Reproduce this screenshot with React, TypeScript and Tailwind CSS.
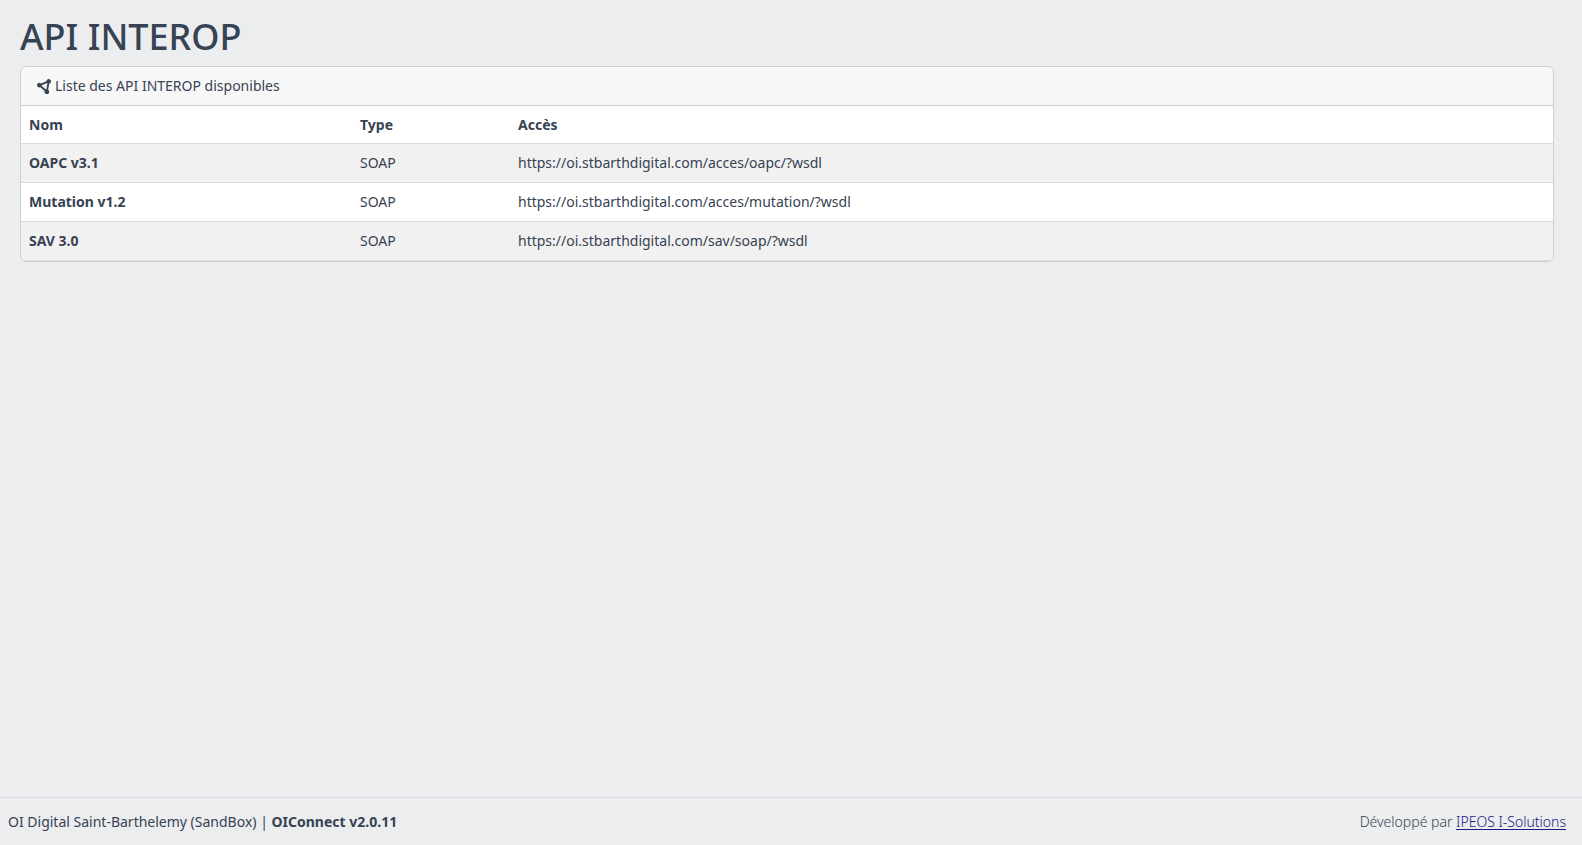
import { FaCircleNodes } from "react-icons/fa6";

interface Api {
  name: string;
  type: string;
  url: string;
}

const apis: Api[] = [
  { name: "OAPC v3.1", type: "SOAP", url: "https://oi.stbarthdigital.com/acces/oapc/?wsdl" },
  { name: "Mutation v1.2", type: "SOAP", url: "https://oi.stbarthdigital.com/acces/mutation/?wsdl" },
  { name: "SAV 3.0", type: "SOAP", url: "https://oi.stbarthdigital.com/sav/soap/?wsdl" },
];

function ApiTable() {
  return (
    <table className="w-full table-fixed text-left">
      <thead className="leading-[21px]">
        <tr className="border-b border-[#d8dbe0] bg-white">
          <th className="w-[331px] p-2 font-bold">Nom</th>
          <th className="w-[158px] p-2 font-bold">Type</th>
          <th className="p-2 font-bold">Accès</th>
        </tr>
      </thead>
      <tbody>
        {apis.map((api) => (
          <tr key={api.name} className="border-b border-[#d8dbe0] bg-white odd:bg-[#f1f1f1]">
            <th className="p-2 font-bold">{api.name}</th>
            <td className="p-2">{api.type}</td>
            <td className="p-2">{api.url}</td>
          </tr>
        ))}
      </tbody>
    </table>
  );
}

export default function App() {
  return (
    <div className="flex min-h-screen flex-col bg-[#ebedef] font-['Noto_Sans',sans-serif] text-[14px] leading-[22px] text-[#374253]">
      <main className="grow pt-4 pr-7 pl-5">
        <h1 className="mb-2 text-[36px] leading-[42px] font-medium">API INTEROP</h1>
        <div className="overflow-hidden rounded-md border border-[#cdcfd3]">
          <div className="flex items-center gap-[3px] border-b border-[#c9cacc] bg-[#f7f7f7] px-4 py-2">
            <FaCircleNodes className="size-[15px]" />
            Liste des API INTEROP disponibles
          </div>
          <ApiTable />
        </div>
      </main>

      <footer className="flex min-h-12 items-center justify-between border-t border-[#d8dbe0] pr-4 pl-2">
        <div>
          OI Digital Saint-Barthelemy (SandBox) | <strong>OIConnect v2.0.11</strong>
        </div>
        <div className="font-light">
          Développé par{" "}
          <a href="#" className="text-[#1b1a80] underline underline-offset-2">
            IPEOS I-Solutions
          </a>
        </div>
      </footer>
    </div>
  );
}
